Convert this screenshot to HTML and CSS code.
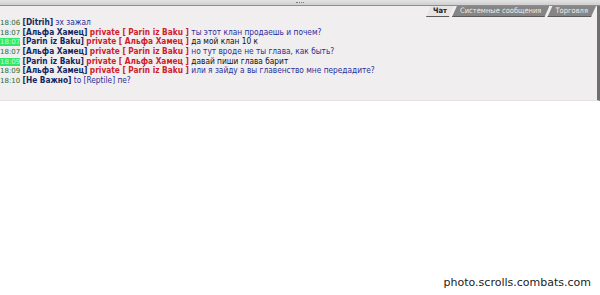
FILE: index.html
```html
<!DOCTYPE html>
<html lang="ru">
<head>
    <meta charset="UTF-8">
    <title>Чат</title>
    <link rel="stylesheet" href="styles.css">
</head>
<body>
    <div class="page">
        <!-- resize grip -->
        <div class="chat-top"><span class="grip"></span></div>

        <div class="chat-panel">
            <!-- tabs -->
            <div class="chat-tabs">
                <div class="tab active">Чат</div>
                <div class="tab">Системные сообщения</div>
                <div class="tab">Торговля</div>
            </div>

            <!-- messages -->
            <div class="chat-messages">
                <div class="msg"><span class="time">18:06</span> <span class="nick">[Ditrih]</span> <span class="text">эх зажал</span></div>
                <div class="msg"><span class="time">18:07</span> <span class="nick">[Альфа Хамец]</span> <span class="priv">private [ Parin iz Baku ]</span> <span class="text">ты этот клан продаешь и почем?</span></div>
                <div class="msg"><span class="time hl">18:07</span> <span class="nick">[Parin iz Baku]</span> <span class="priv">private [ Альфа Хамец ]</span> <span class="text me">да мой клан 10 к</span></div>
                <div class="msg"><span class="time">18:07</span> <span class="nick">[Альфа Хамец]</span> <span class="priv">private [ Parin iz Baku ]</span> <span class="text">но тут вроде не ты глава, как быть?</span></div>
                <div class="msg"><span class="time hl">18:09</span> <span class="nick">[Parin iz Baku]</span> <span class="priv">private [ Альфа Хамец ]</span> <span class="text me">давай пиши глава барит</span></div>
                <div class="msg"><span class="time">18:09</span> <span class="nick">[Альфа Хамец]</span> <span class="priv">private [ Parin iz Baku ]</span> <span class="text">или я зайду а вы главенство мне передадите?</span></div>
                <div class="msg"><span class="time">18:10</span> <span class="nick">[Не Важно]</span> <span class="text">to [Reptile] пе?</span></div>
            </div>
        </div>

        <div class="watermark">photo.scrolls.combats.com</div>
    </div>
</body>
</html>
```

FILE: styles.css
```css
body {
    margin: 0;
    background-color: #fff;
    font-family: "DejaVu Sans Condensed", "DejaVu Sans", Verdana, sans-serif;
    font-stretch: semi-condensed;
}

.page {
    width: 600px;
    height: 295px;
    display: flex;
    flex-direction: column;
}

.chat-top {
    height: 5px;
    background: linear-gradient(#e4e4e4, #cfcfcf);
    border-bottom: 1px solid #8e8e8e;
    display: flex;
    justify-content: center;
    align-items: center;
}

.grip {
    width: 8px;
    border-top: 1px dotted #7a7a7a;
}

.chat-panel {
    height: 94px;
    background-color: #f0eeef;
    border-right: 3px solid #6f6f6f;
    border-bottom: 1px solid #e4e2e2;
}

/* tabs */
.chat-tabs {
    display: flex;
    justify-content: flex-end;
    height: 11px;
    padding-right: 1px;
}

.tab {
    height: 10px;
    line-height: 10px;
    padding: 0 8px;
    margin-left: -2px;
    font-size: 7.5px;
    color: #ececec;
    background-color: #858585;
    clip-path: polygon(5px 0, 100% 0, calc(100% - 5px) 100%, 0 100%);
    border-bottom: 1px solid #5a5a5a;
}

.tab.active {
    background-color: #e6e4e4;
    color: #222;
    font-weight: bold;
    padding: 0 7px;
}

/* messages */
.chat-messages {
    padding-top: 1px;
}

.msg {
    height: 9.7px;
    line-height: 9.7px;
    font-size: 8.25px;
    white-space: nowrap;
    color: #2a2f98;
}

.time {
    font-family: "DejaVu Sans", Verdana, sans-serif;
    font-stretch: normal;
    font-size: 7px;
    color: #2f6a2f;
}

.time.hl {
    background-color: #2fe86a;
    color: #c9ffd8;
}

.nick {
    font-weight: bold;
    color: #13285e;
}

.priv {
    font-weight: bold;
    color: #d0202a;
}

.text.me {
    color: #111;
}

.watermark {
    margin-top: auto;
    margin-bottom: 6px;
    padding-right: 9px;
    text-align: right;
    font-size: 11px;
    font-family: "DejaVu Sans", Verdana, sans-serif;
    font-stretch: normal;
    color: #222;
}
```
